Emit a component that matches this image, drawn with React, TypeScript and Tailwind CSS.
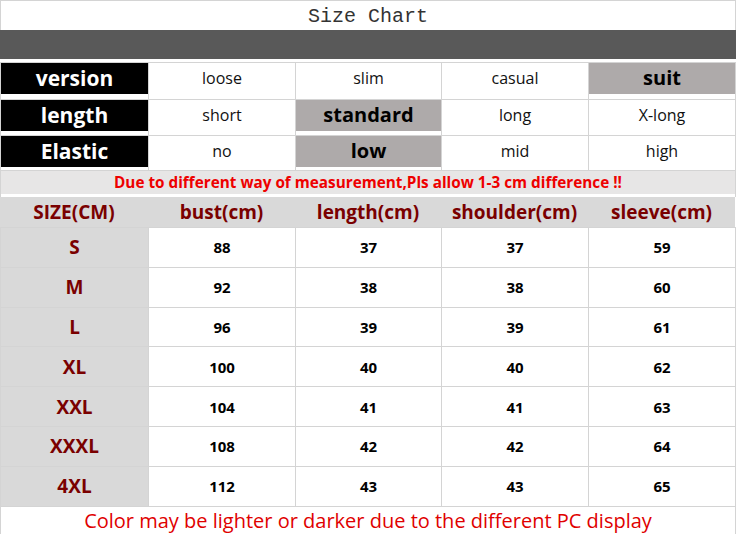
import React from "react";

const LINE = "border-[#d4d4d4]";
const sans = { fontFamily: '"Open Sans", "Noto Sans", Arial, sans-serif' };

type Cell = { text: string; hl?: boolean };

function AttrRow({ label, cells, h, pad }: { label: string; cells: Cell[]; h: string; pad: string }) {
  return (
    <div className={`grid grid-cols-[148px_147px_146px_147px_147px_1px] border-t ${LINE}`}>
      <div className={`border-l ${LINE} flex flex-col`}>
        <div className={`${h} bg-black text-white font-bold text-[21px] flex items-center justify-center`}>{label}</div>
        <div className={pad} />
      </div>
      {cells.map((c, i) => (
        <div key={i} className={`border-l ${LINE} flex flex-col`}>
          <div
            className={`${h} flex items-center justify-center ${
              c.hl ? "bg-[#aeaaaa] font-bold text-[20px] text-black" : "bg-white text-[16px] text-[#111]"
            }`}
          >
            {c.text}
          </div>
          <div className={pad} />
        </div>
      ))}
      <div className={`border-l ${LINE}`} />
    </div>
  );
}

const data = [
  ["S", "88", "37", "37", "59"],
  ["M", "92", "38", "38", "60"],
  ["L", "96", "39", "39", "61"],
  ["XL", "100", "40", "40", "62"],
  ["XXL", "104", "41", "41", "63"],
  ["XXXL", "108", "42", "42", "64"],
  ["4XL", "112", "43", "43", "65"],
];

export default function App() {
  return (
    <div className="w-[736px] h-[534px] bg-white overflow-hidden flex flex-col" style={sans}>
      {/* Title */}
      <div
        className={`h-[30px] pt-[3px] border-t border-l border-r ${LINE} flex items-center justify-center text-[20px] text-[#333]`}
        style={{ fontFamily: '"Liberation Mono", "DejaVu Sans Mono", monospace' }}
      >
        Size Chart
      </div>
      {/* Dark bar */}
      <div className="h-[29px] bg-[#595959]" />
      <div className="h-[3px]" />

      <AttrRow
        label="version"
        h="h-[31px]"
        pad="h-[5px]"
        cells={[{ text: "loose" }, { text: "slim" }, { text: "casual" }, { text: "suit", hl: true }]}
      />
      <AttrRow
        label="length"
        h="h-[31px]"
        pad="h-[4px]"
        cells={[{ text: "short" }, { text: "standard", hl: true }, { text: "long" }, { text: "X-long" }]}
      />
      <AttrRow
        label="Elastic"
        h="h-[31px]"
        pad="h-[3px]"
        cells={[{ text: "no" }, { text: "low", hl: true }, { text: "mid" }, { text: "high" }]}
      />

      {/* Notice */}
      <div className={`border-t ${LINE} border-l border-r`}>
        <div className="h-[23px] bg-[#e7e6e6] flex items-center justify-center text-[15.3px] font-bold text-[#ee0000]">
          Due to different way of measurement,Pls allow 1-3 cm difference !!
        </div>
        <div className="h-[3px]" />
      </div>

      {/* Header */}
      <div className="grid grid-cols-[148px_147px_146px_147px_147px_1px] h-[30px] bg-[#d9d9d9]">
        {["SIZE(CM)", "bust(cm)", "length(cm)", "shoulder(cm)", "sleeve(cm)"].map((t, i) => (
          <div
            key={i}
            className="flex items-center justify-center text-[19px] font-bold text-[#7a0000]"
          >
            {t}
          </div>
        ))}
        <div className="bg-white" />
      </div>

      {/* Data */}
      {data.map((row, r) => (
        <div
          key={r}
          className={`grid grid-cols-[148px_147px_146px_147px_147px_1px] h-[40px] border-t ${LINE}`}
        >
          {row.map((v, i) =>
            i === 0 ? (
              <div
                key={i}
                className={`border-l ${LINE} bg-[#d9d9d9] flex items-center justify-center text-[19px] font-bold text-[#7a0000]`}
              >
                {v}
              </div>
            ) : (
              <div
                key={i}
                className={`border-l ${LINE} flex items-center justify-center text-[15px] font-bold text-black`}
              >
                {v}
              </div>
            )
          )}
          <div className={`border-l ${LINE}`} />
        </div>
      ))}

      {/* Footer */}
      <div
        className={`h-[28px] border-t border-l border-r ${LINE} flex items-center justify-center text-[20px] text-[#e00000]`}
      >
        Color may be lighter or darker due to the different PC display
      </div>
    </div>
  );
}
